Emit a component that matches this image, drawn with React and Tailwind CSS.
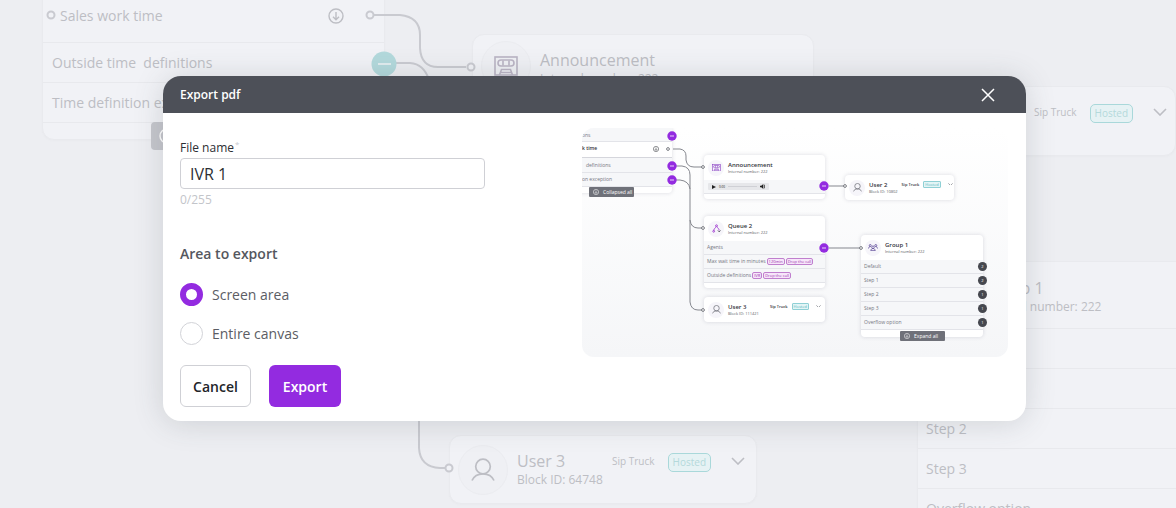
import React, { useState } from 'react';
import clsx from 'clsx';

const groupSteps = [
  { name: 'Default', count: 2 },
  { name: 'Step 1', count: 2 },
  { name: 'Step 2', count: 1 },
  { name: 'Step 3', count: 1 },
  { name: 'Overflow option', count: 1 }
];

/* ---------- icons ---------- */

function ChevronIcon({ className }) {
  return (
    <svg viewBox="0 0 14 8" fill="none" stroke="currentColor" strokeWidth="1.6" className={className}>
      <path d="M1 1l6 6 6-6" />
    </svg>
  );
}

function UserIcon({ className }) {
  return (
    <svg viewBox="0 0 24 24" fill="none" stroke="currentColor" strokeWidth="1.7" className={className}>
      <circle cx="12" cy="8.5" r="7.3" />
      <path d="M1 22.5c2-4.500 6-6.700 11-6.700s9 2.200 11 6.700" />
    </svg>
  );
}

function CassetteIcon({ className }) {
  return (
    <svg viewBox="0 0 24 20" fill="none" stroke="currentColor" strokeWidth="1.6" className={className}>
      <rect x="1" y="1" width="22" height="18" />
      <rect x="4" y="4" width="16" height="6" rx="3" />
      <path d="M9 4.500v5M15 4.500v5M5.500 19l2-5.500h9l2 5.500M7 16.500h10" />
    </svg>
  );
}

function QueueIcon({ className }) {
  return (
    <svg viewBox="0 0 16 16" fill="none" stroke="currentColor" strokeWidth="1.6" className={className}>
      <circle cx="8" cy="3" r="1.6" />
      <path d="M7 4.500c-.5 3-3.500 3-3.800 7M9 4.500c.5 3 3.500 3 3.800 7" />
      <circle cx="3" cy="13" r="1.6" />
      <path d="M10.500 11.500l2.300 2.500 2.300-2.500" stroke="#4b4e57" />
    </svg>
  );
}

function GroupIcon({ className }) {
  return (
    <svg viewBox="0 0 20 14" fill="none" stroke="currentColor" strokeWidth="1.5" className={className}>
      <circle cx="10" cy="6.500" r="2.6" />
      <path d="M5.500 13.300c.5-3 2.200-4.200 4.500-4.200s4 1.200 4.500 4.200z" />
      <circle cx="4.500" cy="3" r="2" />
      <circle cx="15.500" cy="3" r="2" />
      <path d="M1 9c.3-2.500 1.500-3.700 3.500-3.700M19 9c-.3-2.500-1.500-3.700-3.500-3.700" />
    </svg>
  );
}

function ArrowCircleIcon({ className }) {
  return (
    <svg viewBox="0 0 16 16" fill="none" stroke="currentColor" strokeWidth="1.4" className={className}>
      <circle cx="8" cy="8" r="7" />
      <path d="M8 4v7.500M5 8.700l3 3 3-3" />
    </svg>
  );
}

/* ---------- workspace behind the dialog ---------- */

function WorkspaceNode({ className, children }) {
  return (
    <div className={clsx('absolute border border-[#e9eaee] bg-[#f1f2f6] shadow-[0_1px_3px_rgba(0,0,0,0.02)]', className)}>
      {children}
    </div>
  );
}

function NodeAvatar({ children }) {
  return (
    <div className="flex size-[50px] shrink-0 items-center justify-center rounded-full border border-[#ebecf0] bg-[#eff0f4]">
      {children}
    </div>
  );
}

function TruckTags() {
  return (
    <div className="flex items-start gap-[13px] whitespace-nowrap text-[10px] leading-[17px]">
      <span>Sip Truck</span>
      <span className="rounded-[5px] border border-[#a9d8da] bg-[#e6f2f4] px-1 text-[#b4d9db]">Hosted</span>
    </div>
  );
}

function Workspace() {
  return (
    <div className="absolute inset-0 overflow-hidden text-[#bdbec4]" aria-hidden="true">
      <WorkspaceNode className="-top-1 left-[42px] w-[343px] rounded-b-xl text-[14px] font-medium">
        <div className="flex h-[46px] items-center justify-between border-b border-[#e8e9ed] pb-2 pl-[17px] pr-10">
          <span className="font-normal">Sales work time</span>
          <ArrowCircleIcon className="size-4" />
        </div>
        <div className="flex h-10 items-center whitespace-pre border-b border-[#e8e9ed] px-[9px]">Outside time  definitions</div>
        <div className="flex h-10 items-center border-b border-[#e8e9ed] px-[9px]">Time definition exception</div>
        <div className="h-4" />
      </WorkspaceNode>
      <div className="absolute left-[151px] top-[122px] flex h-7 w-28 items-center rounded bg-[#c6c7cd] px-2 text-[11px] text-white">
        <ArrowCircleIcon className="size-4" />
      </div>

      <WorkspaceNode className="left-[472px] top-[34px] w-[342px] rounded-xl">
        <div className="flex h-[62px] items-center gap-[9px] pl-2">
          <NodeAvatar>
            <CassetteIcon className="h-5 w-6 text-[#bab4c4]" />
          </NodeAvatar>
          <div className="pt-1">
            <div className="text-[16px] leading-[20px] font-medium">Announcement</div>
            <div className="text-[12px] leading-[17px]">Internal number: 222</div>
          </div>
        </div>
      </WorkspaceNode>

      <WorkspaceNode className="left-[868px] top-[86px] w-[308px] rounded-xl">
        <div className="flex h-[68px] justify-end gap-5 pr-2 pt-[17px]">
          <TruckTags />
          <ChevronIcon className="mt-1 h-2 w-3.5" />
        </div>
      </WorkspaceNode>

      <WorkspaceNode className="left-[917px] top-[261px] w-[343px] rounded-xl bg-[#eff0f4]">
        <div className="flex h-[67px] items-center gap-[7px] border-b border-[#e8e9ed] pl-2">
          <NodeAvatar>
            <GroupIcon className="w-6" />
          </NodeAvatar>
          <div className="pt-1">
            <div className="text-[16px] leading-[20px] font-medium">Group 1</div>
            <div className="text-[12px] leading-[18px]">Internal number: 222</div>
          </div>
        </div>
        {groupSteps.map((step) => (
          <div key={step.name} className="flex h-10 items-center border-b border-[#e8e9ed] px-2 text-[14px] font-medium">
            {step.name}
          </div>
        ))}
      </WorkspaceNode>

      <WorkspaceNode className="left-[449px] top-[435px] w-[308px] rounded-xl">
        <div className="flex h-[67px] items-center gap-[9px] pl-2 pr-[11px]">
          <NodeAvatar>
            <UserIcon className="size-6" />
          </NodeAvatar>
          <div className="flex-1">
            <div className="text-[16px] leading-[20px] font-medium">User 3</div>
            <div className="text-[12px] leading-[17px]">Block ID: 64748</div>
          </div>
          <div className="flex gap-5 pb-3.5">
            <TruckTags />
            <ChevronIcon className="mt-1 h-2 w-3.5" />
          </div>
        </div>
      </WorkspaceNode>

      <svg className="absolute left-0 top-0 h-[508px] w-[1176px]" fill="none" stroke="#c9cad0" strokeWidth="2">
        <path d="M374 15H400Q420 17 420 35V48Q421 67 438 67H466" />
        <path d="M396 63H410Q424 64 429 80" />
        <path d="M419 400V448Q420 467 440 468H445" />
        <circle cx="51" cy="15" r="3.5" />
        <circle cx="370" cy="15" r="3.5" fill="#f1f2f6" />
        <circle cx="471" cy="67" r="3.5" fill="#f1f2f6" />
        <circle cx="449" cy="468" r="3.5" fill="#f1f2f6" />
        <circle cx="384" cy="64" r="12.5" fill="#b3d9dc" stroke="none" />
        <path d="M378 64H391" stroke="#f1f2f6" strokeWidth="1.5" />
      </svg>
    </div>
  );
}

/* ---------- export preview ---------- */

function PreviewNode({ className, children }) {
  return (
    <div className={clsx('absolute rounded-[4px] bg-white text-[#5b5d66] shadow-[0_0_4px_rgba(30,30,60,0.15)]', className)}>
      {children}
    </div>
  );
}

function PreviewHeader({ icon, title, subtitle, children }) {
  return (
    <div className="flex h-[25px] items-center gap-[4px] whitespace-nowrap pl-[4px] pr-[4px]">
      <div className="flex size-4 shrink-0 items-center justify-center rounded-full bg-[#f6f5fa]">{icon}</div>
      <div className="flex-1">
        <div className="text-[6px] leading-[7px] font-semibold text-[#33353c]">{title}</div>
        <div className="text-[4px] leading-[5px]">{subtitle}</div>
      </div>
      {children}
    </div>
  );
}

function PreviewTruck() {
  return (
    <div className="flex items-center gap-[4px] pb-[7px] text-[4px] leading-[5px]">
      <span className="font-semibold text-[#33353c]">Sip Truck</span>
      <span className="rounded-[1px] border border-[#8fd0d5] bg-[#e3f5f6] px-[1px] text-[#5bb7be]">Hosted</span>
      <ChevronIcon className="ml-[3px] w-[5px]" />
    </div>
  );
}

function PreviewRow({ children }) {
  return (
    <div className="flex h-[14px] items-center gap-[1px] whitespace-nowrap border-b border-[#e3e4e9] bg-[#f6f7f9] px-[3px] text-[5px] leading-[7px] text-[#74767f]">
      {children}
    </div>
  );
}

function PreviewTag({ children }) {
  return (
    <span className="rounded-[2px] border border-[#c07fce] bg-[#f7e6fa] px-[1px] text-[4px] leading-[5px] font-medium text-[#9a35ae]">
      {children}
    </span>
  );
}

function PreviewTab({ className, icon, children }) {
  return (
    <div className={clsx('absolute flex h-[10px] w-[45px] items-center gap-[4px] whitespace-nowrap rounded-[1px] bg-[#6f7179] pl-[4px] text-[5px] leading-[7px] text-white', className)}>
      {icon}
      {children}
    </div>
  );
}

function MinusDot({ x, y }) {
  return (
    <g>
      <circle cx={x} cy={y} r="4.7" fill="#932be0" />
      <path d={`M${x - 2} ${y}h4`} stroke="#fff" strokeWidth="0.8" />
    </g>
  );
}

function Port({ x, y }) {
  return <circle cx={x} cy={y} r="1.4" fill="#fff" stroke="#5c5e66" strokeWidth="0.8" />;
}

function ExportPreview() {
  return (
    <div
      role="img"
      aria-label="Export preview"
      className="relative h-[229px] w-[426px] shrink-0 overflow-hidden rounded-xl bg-linear-to-b from-white to-[#f5f6f8]"
    >
      <PreviewNode className="-left-[31px] top-0 w-[121px] rounded-t-none leading-[7px]">
        <div className="flex h-[14px] items-center border-b border-[#e3e4e9] bg-[#f6f7f9] pl-[31px] pt-[2px] text-[5px] text-[#74767f]">ons</div>
        <div className="flex h-[16px] items-center justify-between border-b border-[#d5d6dc] pb-[2px] pl-[31px] pr-[13px] text-[5px] font-semibold text-[#33353c]">
          <span>k time</span>
          <ArrowCircleIcon className="size-[6px]" />
        </div>
        <div className="flex h-[15px] items-center border-b border-[#e3e4e9] bg-[#f6f7f9] pl-[35px] text-[5px] text-[#74767f]">definitions</div>
        <div className="flex h-[14px] items-center border-b border-[#e3e4e9] bg-[#f6f7f9] pl-[31px] text-[5px] text-[#74767f]">on exception</div>
        <div className="h-[6px]" />
      </PreviewNode>

      <PreviewNode className="left-[122px] top-[27px] w-[121px]">
        <PreviewHeader icon={<CassetteIcon className="w-[9px] text-[#8a3fc4]" />} title="Announcement" subtitle="Internal number: 222" />
        <PreviewRow>
          <div className="ml-[1px] flex h-[7px] w-[61px] items-center gap-[3px] rounded-[1px] bg-[#e6e7ea] px-[4px] text-[#222]">
            <svg viewBox="0 0 4 4" className="size-[4px]"><path d="M0 0l4 2-4 2z" fill="currentColor" /></svg>
            <span className="text-[3px] leading-[4px]">0:00</span>
            <span className="h-px flex-1 bg-[#cfd0d5]" />
            <svg viewBox="0 0 6 6" className="size-[5px]"><path d="M0 2h1.500L4 0v6L1.500 4H0zM5 1v4h.8V1z" fill="currentColor" /></svg>
          </div>
        </PreviewRow>
        <div className="h-[5px]" />
      </PreviewNode>

      <PreviewNode className="left-[263px] top-[47px] w-[109px]">
        <PreviewHeader icon={<UserIcon className="w-[9px]" />} title="User 2" subtitle="Block ID: 10802">
          <PreviewTruck />
        </PreviewHeader>
      </PreviewNode>

      <PreviewNode className="left-[122px] top-[88px] w-[121px]">
        <PreviewHeader icon={<QueueIcon className="w-[9px] text-[#a23bd0]" />} title="Queue 2" subtitle="Internal number: 222" />
        <PreviewRow>Agents</PreviewRow>
        <PreviewRow>
          Max wait time in minutes <PreviewTag>120min</PreviewTag>
          <PreviewTag>Drop the call</PreviewTag>
        </PreviewRow>
        <PreviewRow>
          Outside definitions <PreviewTag>IVR</PreviewTag>
          <PreviewTag>Drop the call</PreviewTag>
        </PreviewRow>
        <div className="h-[5px]" />
      </PreviewNode>

      <PreviewNode className="left-[122px] top-[169px] w-[121px]">
        <PreviewHeader icon={<UserIcon className="w-[9px]" />} title="User 3" subtitle="Block ID: 111421">
          <PreviewTruck />
        </PreviewHeader>
      </PreviewNode>

      <PreviewNode className="left-[279px] top-[107px] w-[122px]">
        <PreviewHeader icon={<GroupIcon className="w-[10px] text-[#5a4596]" />} title="Group 1" subtitle="Internal number: 222" />
        {groupSteps.map((step) => (
          <PreviewRow key={step.name}>
            <span className="flex-1">{step.name}</span>
            <span className="-mr-[7px] flex size-[9px] items-center justify-center rounded-full bg-[#46484f] text-[4px] text-white">
              {step.count}
            </span>
          </PreviewRow>
        ))}
        <div className="h-[7px]" />
      </PreviewNode>

      <svg viewBox="0 0 426 229" className="absolute left-0 top-0 h-[229px] w-[426px]" fill="none">
        <g stroke="#85878e" strokeWidth="1">
          <path d="M91 21h7q6 1 6 7v4q1 7 8 7h9" />
          <path d="M94 38h6q8 1 8 9v127q1 8 8 8h5" />
          <path d="M94 52h4q9 1 10 9M108 92q1 8 8 8h5" />
          <path d="M247 58h15M247 120h32" />
        </g>
        <MinusDot x={90} y={8} />
        <MinusDot x={90} y={38} />
        <MinusDot x={90} y={52} />
        <MinusDot x={242} y={58} />
        <MinusDot x={242} y={120} />
        <Port x={86} y={21} />
        <Port x={121} y={39} />
        <Port x={263} y={58} />
        <Port x={121} y={100} />
        <Port x={121} y={182} />
        <Port x={279} y={120} />
      </svg>

      <PreviewTab className="left-[7px] top-[59px]" icon={<ArrowCircleIcon className="size-[6px]" />}>Collapsed all</PreviewTab>
      <PreviewTab className="left-[318px] top-[203px]" icon={<ArrowCircleIcon className="size-[6px]" />}>Expand all</PreviewTab>
    </div>
  );
}

/* ---------- dialog ---------- */

function AreaOption({ value, label, area, onChange }) {
  return (
    <label className="flex items-center gap-[9px] text-[14px] leading-[23px] text-[#5b5d64]">
      <input
        type="radio"
        name="area"
        value={value}
        checked={area === value}
        onChange={() => onChange(value)}
        className="size-[23px] shrink-0 appearance-none rounded-full border border-[#d2d3d8] bg-white checked:border-[6px] checked:border-[#932be0]"
      />
      {label}
    </label>
  );
}

export default function App() {
  const [fileName, setFileName] = useState('IVR 1');
  const [area, setArea] = useState('screen');

  return (
    <div className="relative min-h-screen overflow-hidden bg-[#edeef2] font-['Open_Sans','Noto_Sans',sans-serif]">
      <Workspace />

      <div className="relative pb-[87px] pl-[163px] pr-[150px] pt-[76px]">
        <form
          role="dialog"
          aria-labelledby="export-title"
          onSubmit={(e) => e.preventDefault()}
          className="overflow-hidden rounded-[18px] bg-white shadow-[0_2px_30px_rgba(60,70,75,0.18)]"
        >
          <header className="flex h-[37px] items-center justify-between bg-[#4d5058] pl-[17px] pr-[31px] text-white">
            <h1 id="export-title" className="text-[12px] font-semibold">Export pdf</h1>
            <button type="button" aria-label="Close">
              <svg viewBox="0 0 14 14" className="size-3.5" fill="none" stroke="currentColor" strokeWidth="1.5">
                <path d="M1 1l12 12M13 1L1 13" />
              </svg>
            </button>
          </header>

          <div className="flex items-start justify-between gap-6 pb-3.5 pl-[17px] pr-[18px] pt-[15px]">
            <div className="w-[305px] pt-3">
              <label htmlFor="file-name" className="flex h-4 items-start text-[12px] leading-[16px] text-[#2c2e33]">
                File name
                <span className="pl-px text-[8px] leading-[8px] text-[#c9cbd1]">*</span>
              </label>
              <input
                id="file-name"
                value={fileName}
                maxLength={255}
                onChange={(e) => setFileName(e.target.value)}
                className="mt-[2px] h-[31px] w-full rounded-[4px] border border-[#cfd0d5] bg-white px-[9px] text-[16px] text-[#2c2e33]"
              />
              <div className="mt-[3px] text-[12px] leading-[16px] text-[#c3c5ca]">0/255</div>

              <fieldset className="mt-9">
                <legend className="text-[14px] leading-[20px] font-semibold text-[#55575e]">Area to export</legend>
                <div className="mt-[19px] flex flex-col gap-4">
                  <AreaOption value="screen" label="Screen area" area={area} onChange={setArea} />
                  <AreaOption value="canvas" label="Entire canvas" area={area} onChange={setArea} />
                </div>
              </fieldset>

              <div className="mt-5 flex gap-[18px] text-[14px] font-semibold">
                <button type="button" className="h-[42px] w-[71px] rounded-[6px] border border-[#cfd0d5] bg-white text-[#222429]">
                  Cancel
                </button>
                <button type="submit" className="h-[42px] w-[72px] rounded-[6px] bg-[#932be0] text-white">
                  Export
                </button>
              </div>
            </div>

            <ExportPreview />
          </div>
        </form>
      </div>
    </div>
  );
}
